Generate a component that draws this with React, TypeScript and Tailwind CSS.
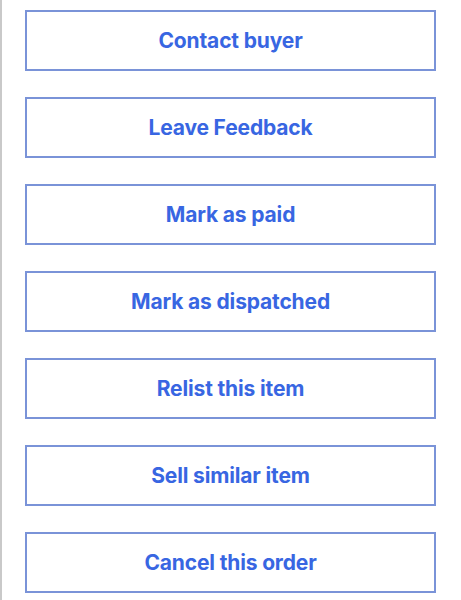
import React from "react";

const items = [
  "Contact buyer",
  "Leave Feedback",
  "Mark as paid",
  "Mark as dispatched",
  "Relist this item",
  "Sell similar item",
  "Cancel this order",
];

export default function App() {
  return (
    <div
      className="min-h-[600px] w-[461px] bg-white border-l-2 border-[#c9c9c9] pl-[23px] pr-[25px] pt-[10px] flex flex-col gap-[26px]"
      style={{ fontFamily: "Inter, 'Liberation Sans', sans-serif" }}
    >
      {items.map((t) => (
        <button
          key={t}
          className="h-[61px] w-full border-2 border-[#7a93d8] bg-white flex items-center justify-center text-[21px] font-bold text-[#3866e2] tracking-[-0.15px]"
        >
          {t}
        </button>
      ))}
    </div>
  );
}
